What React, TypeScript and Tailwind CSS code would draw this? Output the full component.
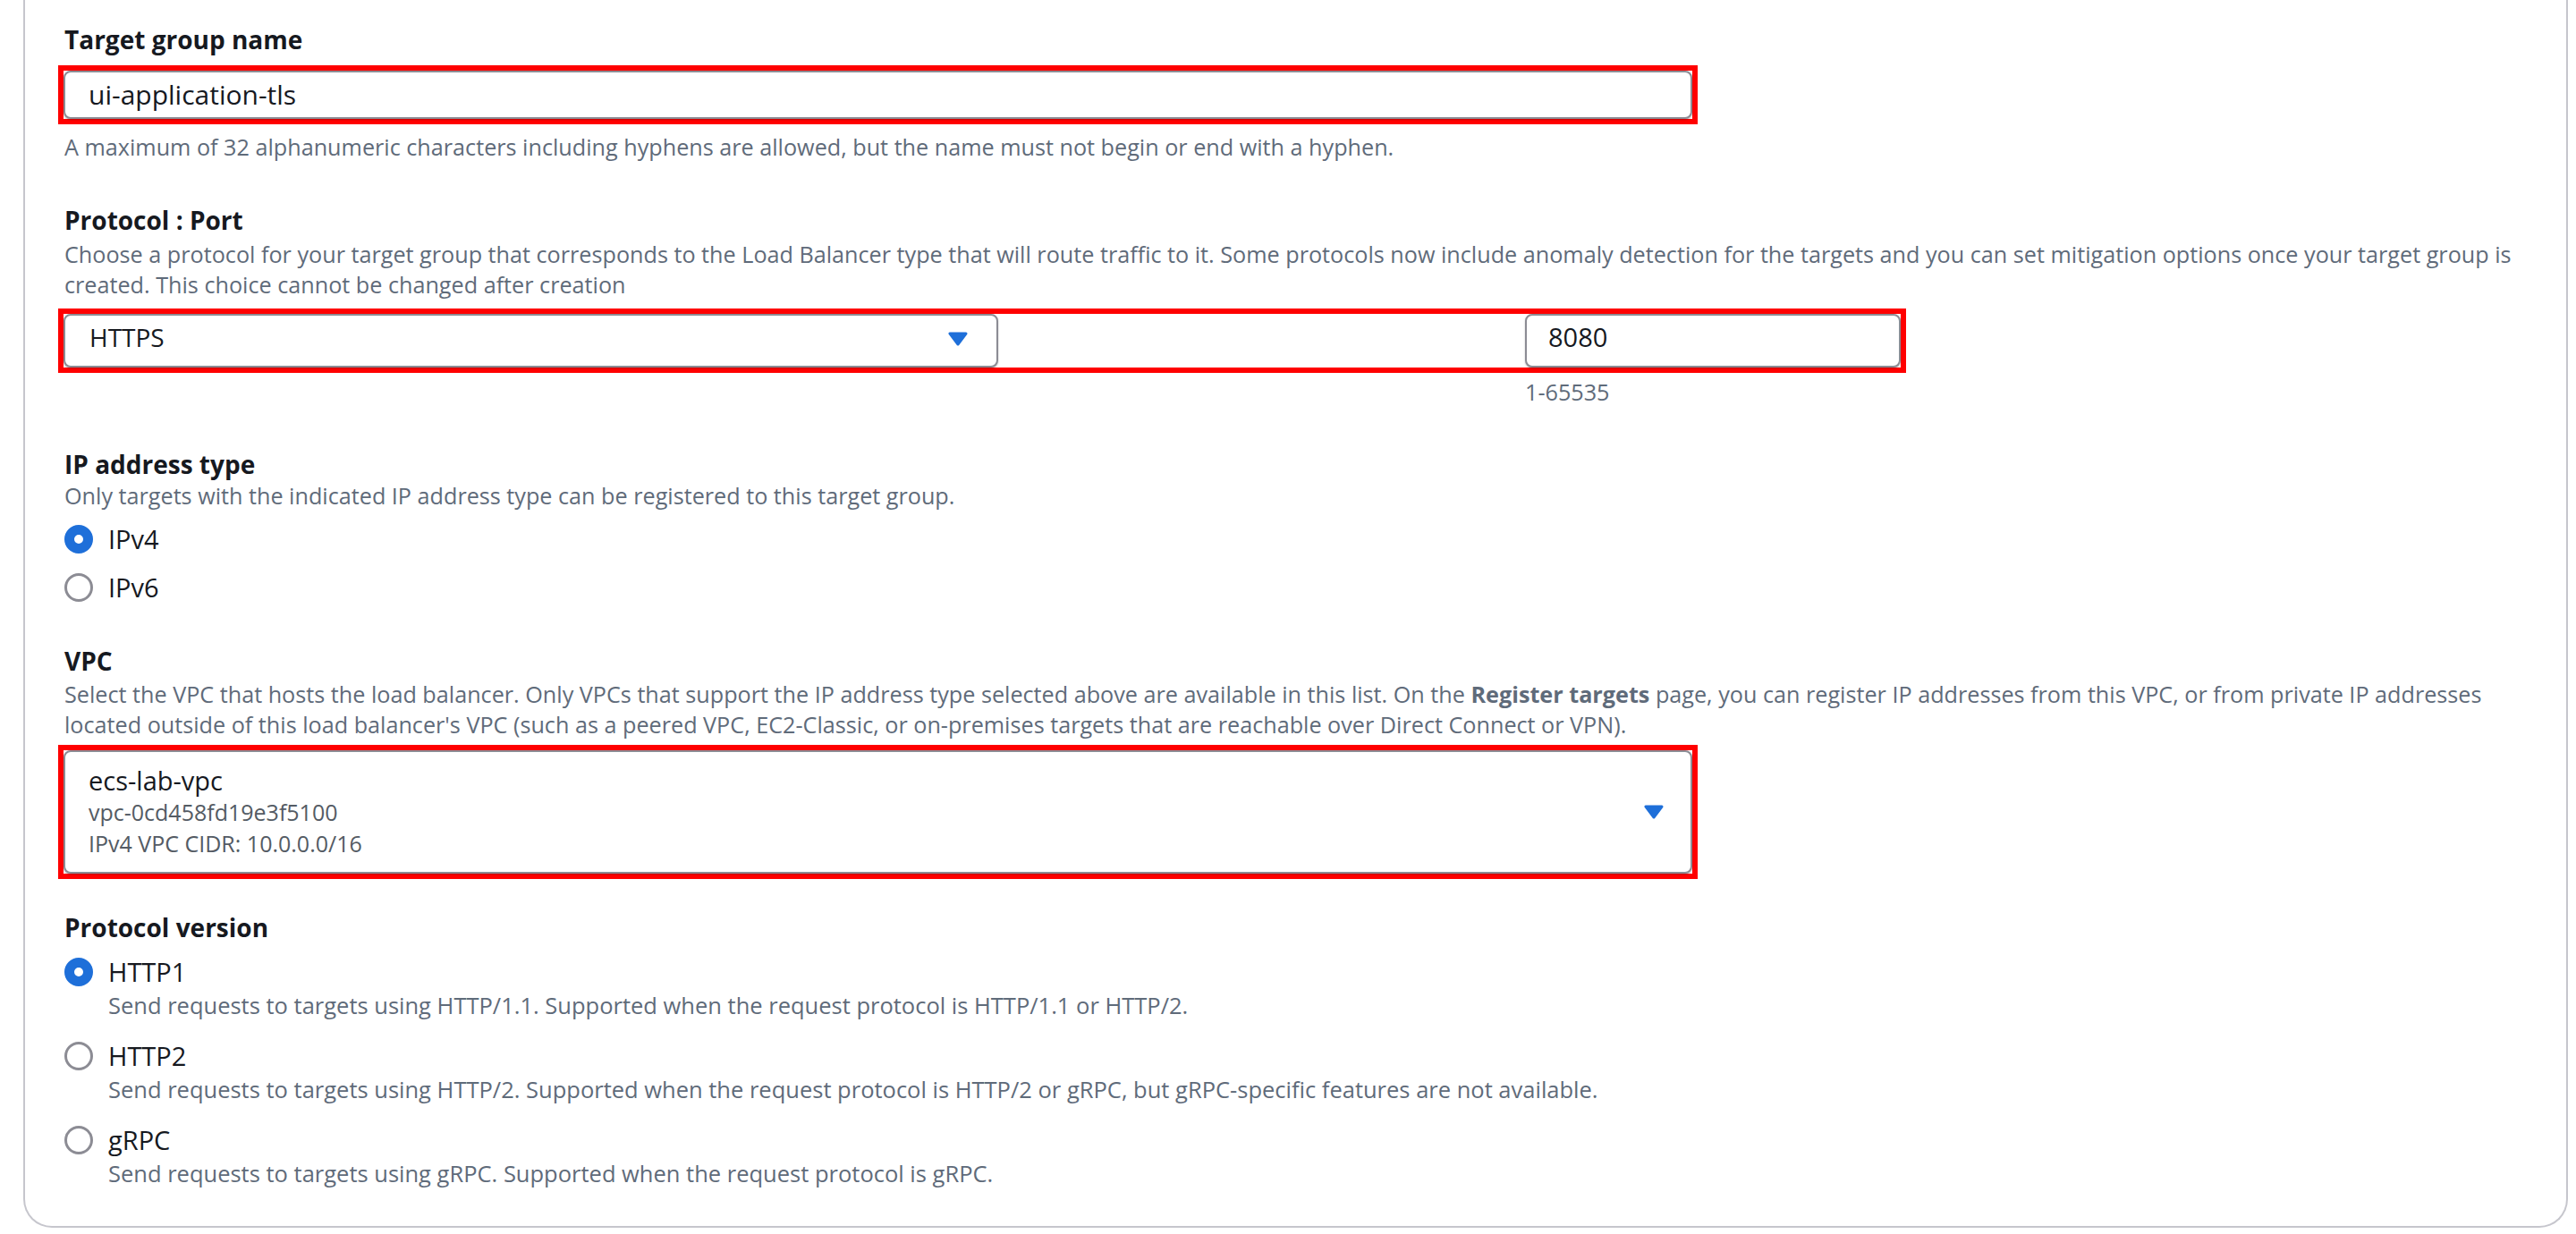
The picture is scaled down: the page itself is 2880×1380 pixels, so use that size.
import React from "react";

function Caret() {
  return (
    <svg width="22" height="16" viewBox="0 0 22 16" className="shrink-0">
      <polygon points="2,2 20,2 11,14" fill="#1e6fd9" stroke="#1e6fd9" strokeWidth="3" strokeLinejoin="round" />
    </svg>
  );
}

function Radio({ checked }: { checked: boolean }) {
  return checked ? (
    <div className="w-[32px] h-[32px] shrink-0 rounded-full border-[11px] border-[#1e6fd9] bg-white" />
  ) : (
    <div className="w-[32px] h-[32px] shrink-0 rounded-full border-[3px] border-[#8c8c94] bg-white" />
  );
}

function RadioRow({ checked, label }: { checked: boolean; label: string }) {
  return (
    <div className="flex h-[40px] items-center gap-[17px]">
      <Radio checked={checked} />
      <span className="text-[29px] leading-[36px] text-[#16191f]">{label}</span>
    </div>
  );
}

function RadioOption({ checked, label, desc }: { checked: boolean; label: string; desc: string }) {
  return (
    <div>
      <RadioRow checked={checked} label={label} />
      <div className="ml-[49px] text-[25.5px] leading-[34px] text-[#5f6b7a] whitespace-nowrap">{desc}</div>
    </div>
  );
}

export default function App() {
  return (
    <div className="min-h-screen w-[2880px] bg-white font-['Open_Sans',sans-serif] text-[#16191f]">
      <div className="ml-[26px] mr-[9px] border-x-2 border-b-2 border-[#c6c6cd] rounded-b-[32px] pl-[44px] pr-[40px] pt-[26px] pb-[42px]">
        {/* Target group name */}
        <div className="text-[28px] leading-[36px] font-bold">Target group name</div>
        <div className="mt-[11px] -ml-[7px] w-[1833px] border-[6px] border-[#ff0000]">
          <div className="h-[54px] rounded-[8px] border-2 border-[#8c8c94] bg-white pl-[26px] text-[30px] leading-[50px] shadow-[0_1px_2px_rgba(0,0,0,0.25)]">
            ui-application-tls
          </div>
        </div>
        <div className="mt-[8px] text-[25.2px] leading-[34px] text-[#5f6b7a] whitespace-nowrap">
          A maximum of 32 alphanumeric characters including hyphens are allowed, but the name must not begin or end with a hyphen.
        </div>

        {/* Protocol : Port */}
        <div className="mt-[47px] text-[28px] leading-[36px] font-bold">Protocol : Port</div>
        <div className="mt-[3px] text-[25.2px] leading-[34px] text-[#5f6b7a] whitespace-nowrap">
          Choose a protocol for your target group that corresponds to the Load Balancer type that will route traffic to it. Some protocols now include anomaly detection for the targets and you can set mitigation options once your target group is
          <br />
          created. This choice cannot be changed after creation
        </div>
        <div className="mt-[10px] -ml-[7px] w-[2066px] border-[6px] border-[#ff0000] flex justify-between">
          <div className="w-[1045px] h-[60px] rounded-[8px] border-2 border-[#8c8c94] bg-white flex items-center justify-between pl-[27px] pr-[32px] pb-[8px] shadow-[0_1px_2px_rgba(0,0,0,0.25)]">
            <span className="text-[28px] leading-[36px]">HTTPS</span>
            <div className="pt-[4px]">
              <Caret />
            </div>
          </div>
          <div className="w-[420px] h-[60px] rounded-[8px] border-2 border-[#8c8c94] bg-white flex items-center pl-[24px] pb-[8px] shadow-[0_1px_2px_rgba(0,0,0,0.25)]">
            <span className="text-[29px] leading-[36px]">8080</span>
          </div>
        </div>
        <div className="mt-[4px] w-[2053px] flex justify-end">
          <div className="w-[420px] text-[25.2px] leading-[34px] text-[#5f6b7a]">1-65535</div>
        </div>

        {/* IP address type */}
        <div className="mt-[46px] text-[28px] leading-[36px] font-bold">IP address type</div>
        <div className="text-[25.2px] leading-[34px] text-[#5f6b7a] whitespace-nowrap">
          Only targets with the indicated IP address type can be registered to this target group.
        </div>
        <div className="mt-[12px] flex flex-col gap-[14px]">
          <RadioRow checked label="IPv4" />
          <RadioRow checked={false} label="IPv6" />
        </div>

        {/* VPC */}
        <div className="mt-[44px] text-[28px] leading-[36px] font-bold">VPC</div>
        <div className="mt-[2px] text-[25.2px] leading-[34px] text-[#5f6b7a] whitespace-nowrap">
          Select the VPC that hosts the load balancer. Only VPCs that support the IP address type selected above are available in this list. On the{" "}
          <span className="font-bold">Register targets</span> page, you can register IP addresses from this VPC, or from private IP addresses
          <br />
          located outside of this load balancer's VPC (such as a peered VPC, EC2-Classic, or on-premises targets that are reachable over Direct Connect or VPN).
        </div>
        <div className="mt-[6px] -ml-[7px] w-[1833px] border-[6px] border-[#ff0000]">
          <div className="h-[138px] rounded-[8px] border-2 border-[#8c8c94] bg-white flex items-center justify-between pl-[26px] pr-[30px] shadow-[0_1px_2px_rgba(0,0,0,0.25)]">
            <div className="flex flex-col">
              <span className="text-[29px] leading-[36px]">ecs-lab-vpc</span>
              <span className="text-[25px] leading-[35px] text-[#545b64]">vpc-0cd458fd19e3f5100</span>
              <span className="text-[25px] leading-[35px] text-[#545b64]">IPv4 VPC CIDR: 10.0.0.0/16</span>
            </div>
            <Caret />
          </div>
        </div>

        {/* Protocol version */}
        <div className="mt-[36px] text-[28px] leading-[36px] font-bold">Protocol version</div>
        <div className="mt-[12px] flex flex-col gap-[20px]">
          <RadioOption checked label="HTTP1" desc="Send requests to targets using HTTP/1.1. Supported when the request protocol is HTTP/1.1 or HTTP/2." />
          <RadioOption checked={false} label="HTTP2" desc="Send requests to targets using HTTP/2. Supported when the request protocol is HTTP/2 or gRPC, but gRPC-specific features are not available." />
          <RadioOption checked={false} label="gRPC" desc="Send requests to targets using gRPC. Supported when the request protocol is gRPC." />
        </div>
      </div>
    </div>
  );
}
